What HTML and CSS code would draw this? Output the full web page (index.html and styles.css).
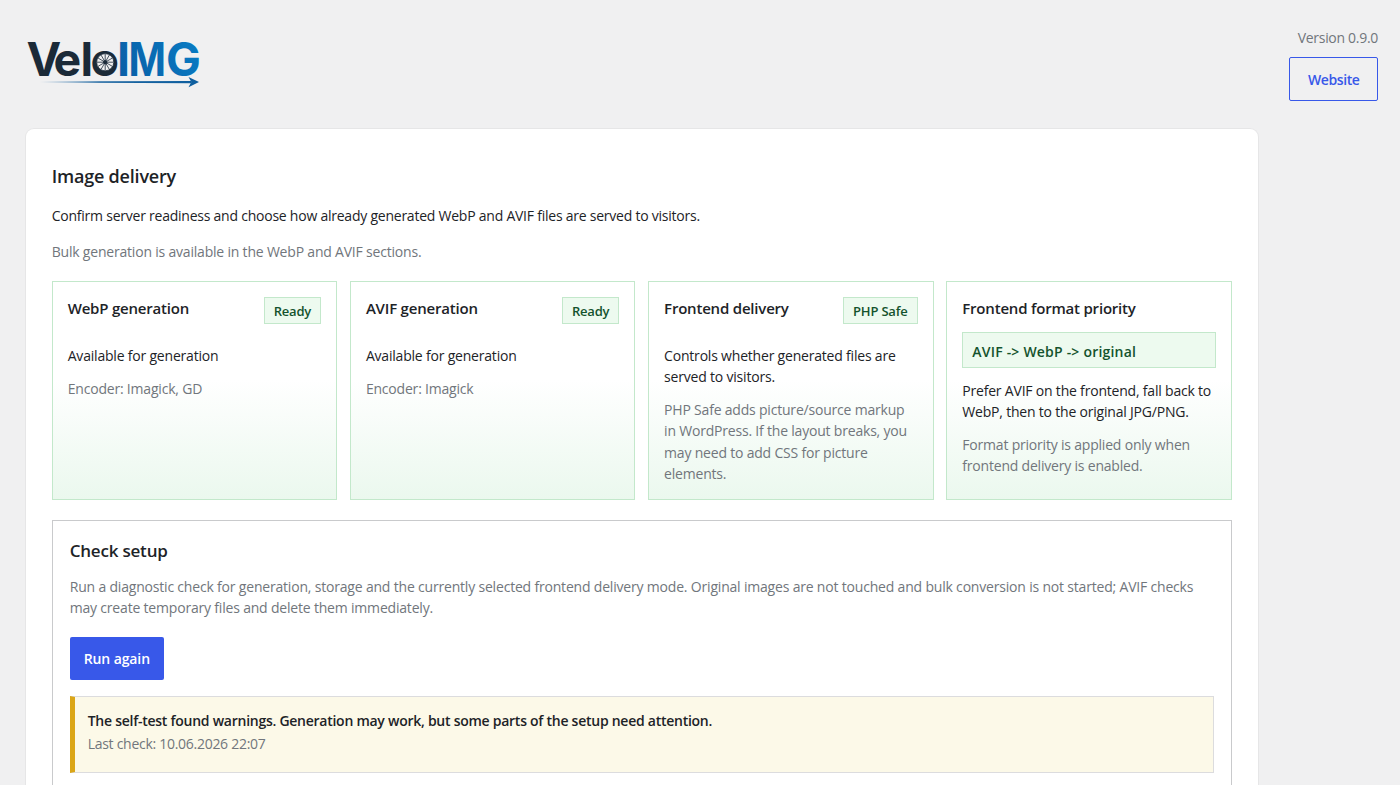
FILE: index.html
```html
<!DOCTYPE html>
<html lang="en">
<head>
  <meta charset="UTF-8">
  <meta name="viewport" content="width=device-width, initial-scale=1.0">
  <title>VeloIMG - Image delivery</title>
  <link rel="stylesheet" href="styles.css">
</head>
<body>
  <header class="topbar">
    <svg class="logo" width="190" height="70" viewBox="0 -12 190 70">
      <defs>
        <linearGradient id="blue" gradientUnits="userSpaceOnUse" x1="95" y1="40" x2="175" y2="0">
          <stop offset="0" stop-color="#0a5ea6"></stop>
          <stop offset="1" stop-color="#087cc4"></stop>
        </linearGradient>
        <linearGradient id="arrow" x1="0" y1="0" x2="1" y2="0">
          <stop offset="0" stop-color="#1a64a0" stop-opacity="0"></stop>
          <stop offset="0.4" stop-color="#1a64a0"></stop>
          <stop offset="1" stop-color="#0f5f9f"></stop>
        </linearGradient>
      </defs>
      <text class="logo-text" y="38.500"><tspan class="dark" x="1.500 28.500 55.500 65.500">Velo</tspan><tspan fill="url(#blue)" x="92">I</tspan><tspan fill="url(#blue)" x="103.500" textLength="37.500" lengthAdjust="spacingAndGlyphs">M</tspan><tspan fill="url(#blue)" x="141">G</tspan></text>
      <!-- Wheel inside the "o" -->
      <g class="wheel">
        <circle class="tyre" cx="80.200" cy="25.200" r="8.600"></circle>
        <path d="M80.200 17v16.400M72 25.200h16.400M76.100 18.100l8.200 14.200M84.300 18.100l-8.200 14.200M73.100 21.100l14.200 8.200M87.300 21.100l-14.200 8.200"></path>
        <circle class="hub" cx="80.200" cy="25.200" r="1.700"></circle>
      </g>
      <!-- Arrow -->
      <path fill="url(#arrow)" d="M15 44.600L166 44v2.200L15 45.400z"></path>
      <path fill="#0f5f9f" d="M163.500 40l10.500 5-10.500 5.200 2.800-5.200z"></path>
    </svg>
    <div class="topbar-side">
      <span class="version">Version 0.9.0</span>
      <a class="button button-outline" href="#">Website</a>
    </div>
  </header>

  <main class="panel">
    <h1>Image delivery</h1>
    <p class="lead">Confirm server readiness and choose how already generated WebP and AVIF files are served to visitors.</p>
    <p class="lead muted">Bulk generation is available in the WebP and AVIF sections.</p>

    <div class="cards">
      <section class="card">
        <div class="card-head">
          <h2>WebP generation</h2>
          <span class="badge">Ready</span>
        </div>
        <p>Available for generation</p>
        <p class="muted">Encoder: Imagick, GD</p>
      </section>
      <section class="card">
        <div class="card-head">
          <h2>AVIF generation</h2>
          <span class="badge">Ready</span>
        </div>
        <p>Available for generation</p>
        <p class="muted">Encoder: Imagick</p>
      </section>
      <section class="card">
        <div class="card-head">
          <h2>Frontend delivery</h2>
          <span class="badge">PHP Safe</span>
        </div>
        <p>Controls whether generated files are<br>served to visitors.</p>
        <p class="muted">PHP Safe adds picture/source markup<br>in WordPress. If the layout breaks, you<br>may need to add CSS for picture<br>elements.</p>
      </section>
      <section class="card">
        <h2>Frontend format priority</h2>
        <div class="priority">AVIF -&gt; WebP -&gt; original</div>
        <p>Prefer AVIF on the frontend, fall back to<br>WebP, then to the original JPG/PNG.</p>
        <p class="muted">Format priority is applied only when<br>frontend delivery is enabled.</p>
      </section>
    </div>

    <section class="setup">
      <h2>Check setup</h2>
      <p class="muted">Run a diagnostic check for generation, storage and the currently selected frontend delivery mode. Original images are not touched and bulk conversion is not started; AVIF checks<br>may create temporary files and delete them immediately.</p>
      <button class="button button-primary">Run again</button>
      <div class="notice">
        <strong>The self-test found warnings. Generation may work, but some parts of the setup need attention.</strong>
        <span class="muted">Last check: 10.06.2026 22:07</span>
      </div>
    </section>
  </main>
</body>
</html>
```
FILE: styles.css
```css
* {
  box-sizing: border-box;
}

body {
  display: flex;
  flex-direction: column;
  margin: 0;
  height: 785px;
  overflow: hidden;
  background: #f0f0f1;
  color: #1d2327;
  font-family: "Segoe UI", "Open Sans", "Noto Sans", sans-serif;
  font-size: 14px;
  letter-spacing: -0.2px;
  line-height: 21.33px;
}

h1, h2, p {
  margin: 0;
}

.muted {
  color: #71767c;
}

/* Header */
.topbar {
  display: flex;
  flex: none;
  align-items: flex-start;
  justify-content: space-between;
  height: 128px;
  padding: 27px 22px 0 25px;
}

.logo {
  margin-top: -2px;
}

.logo-text {
  font-family: "Inter", sans-serif;
  font-size: 46.5px;
  font-weight: 700;
  letter-spacing: 0;
}

.dark {
  fill: #1b2a38;
}

.wheel {
  fill: none;
  stroke: #1b2a38;
  stroke-width: 0.8;
}

.tyre {
  fill: #f0f0f1;
}

.hub {
  fill: #1b2a38;
}

.topbar-side {
  display: flex;
  flex-direction: column;
  align-items: flex-end;
  gap: 9px;
}

.version {
  color: #71767c;
  letter-spacing: -0.3px;
}

.button {
  border-radius: 2px;
  font: inherit;
  font-weight: 600;
  text-decoration: none;
}

.button-outline {
  height: 44px;
  padding: 11px 17.5px;
  border: 1px solid #3858e9;
  color: #3858e9;
  letter-spacing: -0.4px;
}

.button-primary {
  display: block;
  height: 43px;
  padding: 0 14px;
  border: 0;
  background: #3858e9;
  color: #fff;
  letter-spacing: -0.1px;
}

/* Main panel */
.panel {
  flex: 1;
  width: 1234px;
  min-height: 0;
  margin-left: 25px;
  padding: 34px 26.3px 0 25.7px;
  border: 1px solid #e6e6e7;
  border-bottom: 0;
  border-radius: 9px 9px 0 0;
  background: #fff;
  overflow: hidden;
}

h1 {
  font-size: 18px;
  font-weight: 600;
  line-height: 26px;
}

.lead {
  margin-top: 15px;
}

h1 + .lead {
  margin-top: 16px;
  letter-spacing: -0.235px;
}

.cards {
  display: grid;
  grid-template-columns: repeat(4, 1fr);
  gap: 12.8px;
  margin-top: 18px;
}

.card {
  height: 219px;
  padding: 15px;
  border: 1px solid #c3e8cb;
  background: linear-gradient(#fff 45%, #ebf8ee);
  white-space: nowrap;
}

.card-head {
  display: flex;
  align-items: flex-start;
  justify-content: space-between;
  height: 48px;
}

.card h2 {
  font-size: 15px;
  font-weight: 600;
  line-height: 23px;
}

.card .muted {
  margin-top: 11.7px;
}

.badge {
  height: 27px;
  padding: 3px 9px;
  border: 1px solid #c3e8cb;
  background: #edfaef;
  color: #14532d;
  font-size: 13px;
  font-weight: 600;
}

.priority {
  height: 36px;
  margin: 12px 0 12px;
  padding: 8px 9px;
  border: 1px solid #c3e8cb;
  background: #edfaef;
  color: #14532d;
  font-weight: 600;
  letter-spacing: 0.2px;
}

/* Check setup */
.setup {
  height: 270px;
  margin-top: 20px;
  padding: 17px 17px 0;
  border: 1px solid #c9cacc;
  border-bottom: 0;
}

.setup h2 {
  margin-bottom: 13px;
  font-size: 17px;
  font-weight: 600;
  line-height: 25px;
}

.setup p {
  letter-spacing: -0.19px;
  white-space: nowrap;
}

.setup .button {
  margin-top: 19px;
}

.notice {
  display: flex;
  flex-direction: column;
  gap: 1px;
  height: 77px;
  margin-top: 16px;
  padding: 13px 13px;
  border: 1px solid #dcdcde;
  border-left: 5px solid #dba617;
  background: #fcf9e8;
}

.notice strong {
  font-weight: 600;
  letter-spacing: -0.26px;
}

.notice .muted {
  letter-spacing: -0.28px;
}
```
